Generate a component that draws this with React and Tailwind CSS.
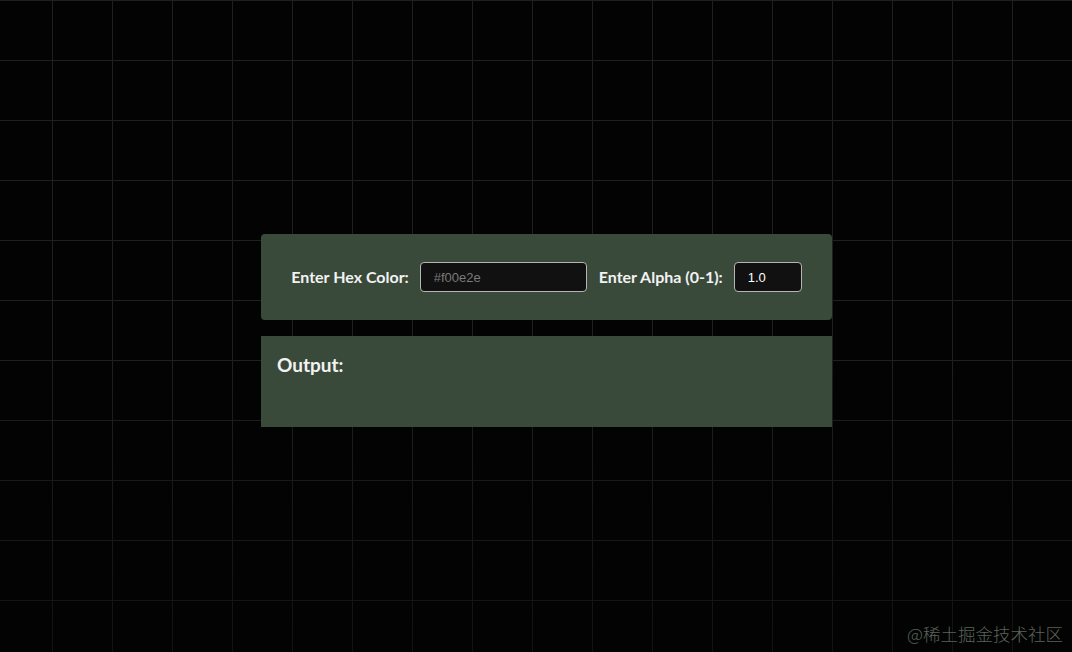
import React from 'react';

export default function App() {
  return (
    <div className="relative h-screen w-full overflow-hidden bg-[#030303] bg-[linear-gradient(to_bottom,transparent_55%,rgba(3,3,3,0.45)),linear-gradient(to_right,#1f1f1f_1px,transparent_1px),linear-gradient(to_bottom,#1f1f1f_1px,transparent_1px)] bg-[size:100%_100%,60px_60px,60px_60px] bg-[position:0_0,52px_0,52px_0]">
      <div className="ml-[261px] w-[571px] pt-[234px]">
        {/* inputs */}
        <div className="flex h-[86px] items-center justify-center gap-[11px] rounded-[4px] bg-[#3a4a3a] font-['Lato',sans-serif]">
          <label className="text-[16px] font-bold text-[#f2f2f2]">Enter Hex Color:</label>
          <input
            type="text"
            placeholder="#f00e2e"
            className="h-[30px] w-[167px] rounded-[4px] border border-[#b5b5b5] bg-[#111111] px-[13px] font-['Liberation_Sans',sans-serif] text-[13px] text-white placeholder:text-[#7a7a7a] outline-none"
          />
          <label className="ml-[1px] text-[16px] font-bold text-[#f2f2f2]">Enter Alpha (0-1):</label>
          <input
            type="text"
            defaultValue="1.0"
            className="h-[30px] w-[68px] rounded-[4px] border border-[#b5b5b5] bg-[#111111] px-[13px] font-['Liberation_Sans',sans-serif] text-[13px] text-white outline-none"
          />
        </div>
        {/* output */}
        <div className="mt-[16px] h-[91px] bg-[#3a4a3a] px-[16px] pt-[17px] font-['Lato',sans-serif]">
          <h2 className="text-[19px] font-bold leading-[24px] text-[#f2f2f2]">Output:</h2>
        </div>
      </div>
      <div className="absolute bottom-[5px] right-[9px] font-['Noto_Sans_CJK_SC',sans-serif] text-[17.5px] font-light text-[#59645a]">@稀土掘金技术社区</div>
    </div>
  );
}
